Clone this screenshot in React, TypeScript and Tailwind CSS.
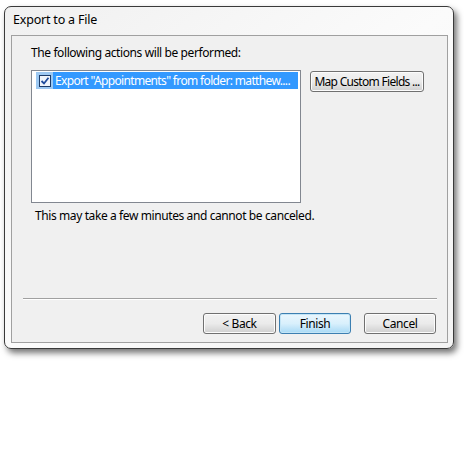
import React from "react";

const font = { fontFamily: '"Noto Sans", "Open Sans", sans-serif' };

function Btn({ children, w, primary, tight }: { children: React.ReactNode; w: string; primary?: boolean; tight?: boolean }) {
  return (
    <div
      className={`${w} h-[21px] flex items-center justify-center whitespace-nowrap rounded-[3px] border text-[12px] ${
        tight ? "tracking-[-0.7px]" : "tracking-[-0.4px]"
      } text-black ${
        primary
          ? "border-[#3c7fb1] bg-gradient-to-b from-[#eaf6fd] via-[#d9f0fc] to-[#a7d9f5] shadow-[inset_0_0_0_1px_#c4e5f6]"
          : "border-[#707070] bg-gradient-to-b from-[#f2f2f2] via-[#ebebeb] to-[#cfcfcf] shadow-[inset_0_0_0_1px_#fcfcfc]"
      }`}
    >
      {children}
    </div>
  );
}

export default function App() {
  return (
    <div className="w-[464px] h-[470px] bg-white overflow-hidden tracking-[-0.4px]" style={font}>
      <div className="ml-[4px] mt-[6px] w-[450px] h-[343px] rounded-[7px] border border-[#3a3a3a] bg-gradient-to-br from-[#f0f0f0] via-[#fbfbfb] to-[#f3f3f3] shadow-[3px_4px_6px_rgba(0,0,0,0.55)] flex flex-col">
        <div className="h-[28px] pl-[8px] pt-[5px] text-[12.5px] text-black leading-[16px] tracking-[-0.2px]">Export to a File</div>
        <div className="ml-[6px] w-[437px] h-[308px] border border-[#a0a0a0] bg-[#f0f0f0] flex flex-col">
          <div className="ml-[19px] mt-[9px] h-[16px] text-[12px] leading-[16px] text-black whitespace-nowrap">
            The following actions will be performed:
          </div>
          <div className="flex mt-[9px] ml-[19px]">
            <div className="w-[270px] h-[133px] border border-[#828790] bg-white p-[1px] pt-[1px]">
              <div className="flex h-[17px] ml-[3px] mr-[1px]">
                <div className="w-[17px] h-[17px] bg-[#9cc8f2] flex items-center justify-center">
                  <div className="w-[12px] h-[12px] border border-[#1c3b68] bg-[#eef4fb] flex items-center justify-center">
                    <svg width="10" height="10" viewBox="0 0 10 10">
                      <path d="M1.5 5 L4 7.5 L8.5 1.8" stroke="#1e4b9c" strokeWidth="1.8" fill="none" />
                    </svg>
                  </div>
                </div>
                <div className="flex-1 bg-[#3399ff] text-white text-[12px] leading-[17px] pl-[2px] whitespace-nowrap tracking-[-0.65px]">
                  Export "Appointments" from folder: matthew....
                </div>
              </div>
            </div>
            <div className="ml-[9px] mt-[1px]">
              <Btn w="w-[114px]" tight>Map Custom Fields ...</Btn>
            </div>
          </div>
          <div className="ml-[23px] mt-[5px] h-[16px] text-[12px] leading-[16px] text-black whitespace-nowrap">
            This may take a few minutes and cannot be canceled.
          </div>
          <div className="ml-[11px] mt-[74px] w-[414px] h-[1px] bg-[#a0a0a0] border-b border-white box-content" />
          <div className="flex mt-[13px] ml-[191px]">
            <Btn w="w-[73px]">&lt; Back</Btn>
            <div className="ml-[3px]">
              <Btn w="w-[72px]" primary>Finish</Btn>
            </div>
            <div className="ml-[13px]">
              <Btn w="w-[72px]">Cancel</Btn>
            </div>
          </div>
        </div>
      </div>
    </div>
  );
}
